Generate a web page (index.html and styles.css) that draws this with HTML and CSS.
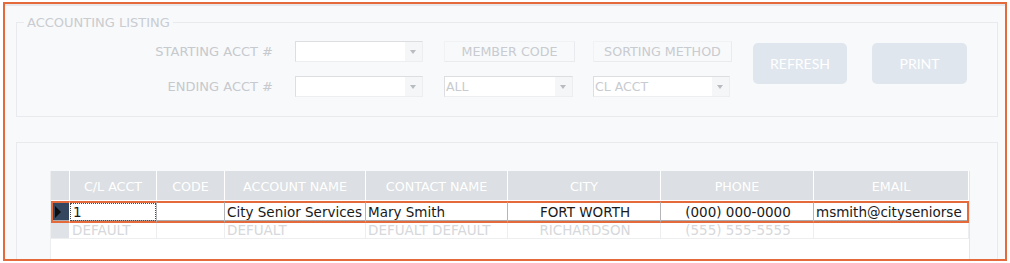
FILE: index.html
```html
<!DOCTYPE html>
<html lang="en">
<head>
    <meta charset="UTF-8">
    <title>Accounting Listing</title>
    <link rel="stylesheet" href="styles.css">
</head>
<body>
    <div class="frame">
        <fieldset class="listing">
            <legend>ACCOUNTING LISTING</legend>
            <div class="filters">
                <div class="labels">
                    <label>STARTING ACCT #</label>
                    <label>ENDING ACCT #</label>
                </div>
                <div class="col col-acct">
                    <div class="combo"><span class="combo-text"></span><span class="combo-btn"></span></div>
                    <div class="combo"><span class="combo-text"></span><span class="combo-btn"></span></div>
                </div>
                <div class="col col-member">
                    <div class="caption">MEMBER CODE</div>
                    <div class="combo combo-member"><span class="combo-text">ALL</span><span class="combo-btn"></span></div>
                </div>
                <div class="col col-sort">
                    <div class="caption">SORTING METHOD</div>
                    <div class="combo combo-sort"><span class="combo-text">CL ACCT</span><span class="combo-btn"></span></div>
                </div>
                <div class="actions">
                    <button class="btn">REFRESH</button>
                    <button class="btn btn-print">PRINT</button>
                </div>
            </div>
        </fieldset>

        <div class="results">
            <div class="grid">
                <table>
                    <colgroup>
                        <col style="width:19px">
                        <col style="width:87px">
                        <col style="width:68px">
                        <col style="width:141px">
                        <col style="width:142px">
                        <col style="width:153px">
                        <col style="width:153px">
                        <col style="width:155px">
                    </colgroup>
                    <thead>
                        <tr>
                            <th></th>
                            <th>C/L ACCT</th>
                            <th>CODE</th>
                            <th>ACCOUNT NAME</th>
                            <th>CONTACT NAME</th>
                            <th>CITY</th>
                            <th>PHONE</th>
                            <th>EMAIL</th>
                        </tr>
                    </thead>
                    <tbody>
                        <tr class="current">
                            <td class="sel"><span class="arrow"></span></td>
                            <td class="focus-cell"><span class="focus">1</span></td>
                            <td></td>
                            <td>City Senior Services</td>
                            <td>Mary Smith</td>
                            <td class="center">FORT WORTH</td>
                            <td class="center">(000) 000-0000</td>
                            <td>msmith@cityseniorse</td>
                        </tr>
                        <tr class="dim">
                            <td class="sel"></td>
                            <td>DEFAULT</td>
                            <td></td>
                            <td>DEFUALT</td>
                            <td>DEFUALT DEFAULT</td>
                            <td class="center">RICHARDSON</td>
                            <td class="center">(555) 555-5555</td>
                            <td></td>
                        </tr>
                    </tbody>
                </table>
            </div>
        </div>
    </div>
</body>
</html>
```

FILE: styles.css
```css
body {
    margin: 0;
    background-color: #fff;
    font-family: "DejaVu Sans", Verdana, sans-serif;
}
.frame {
    margin: 2px 0 0 3px;
    width: 1000px;
    height: 255px;
    border: 2px solid #e4693b;
    background-color: #f8f9fb;
    box-shadow: inset 0 2px 0 #e6e8eb;
    overflow: hidden;
}
.listing {
    margin: 11px 7px 0 11px;
    padding: 0 0 19px;
    border: 1px solid #e8eaed;
    min-width: 0;
}
.listing legend {
    margin-left: 7px;
    padding: 0 3px;
    font-size: 13px;
    line-height: 15px;
    color: #c9ccd0;
}
.filters {
    display: flex;
    margin-top: 11px;
}
.labels {
    width: 256px;
    margin-right: 22px;
    display: flex;
    flex-direction: column;
    align-items: flex-end;
    gap: 14px;
}
.labels label {
    height: 21px;
    line-height: 21px;
    font-size: 13px;
    color: #c6c9cd;
}
.col {
    display: flex;
    flex-direction: column;
    gap: 14px;
}
.col-acct {
    width: 128px;
    margin-right: 21px;
}
.col-member {
    width: 131px;
    margin-right: 18px;
}
.col-sort {
    width: 139px;
    margin-right: 21px;
}
.combo {
    box-sizing: border-box;
    display: flex;
    width: 128px;
    height: 21px;
    background-color: #fff;
    border: 1px solid;
    border-color: #dcdee1 #eceef0 #eceef0 #dcdee1;
}
.combo-member {
    width: 129px;
}
.combo-sort {
    width: 137px;
}
.combo-text {
    flex: 1;
    padding-left: 1px;
    font-size: 12.5px;
    line-height: 19px;
    color: #c8cbcf;
}
.combo-btn {
    width: 17px;
    position: relative;
    background-color: #f5f6f7;
}
.combo-btn::after {
    content: "";
    position: absolute;
    left: 5px;
    top: 8px;
    border-left: 3.5px solid transparent;
    border-right: 3.5px solid transparent;
    border-top: 4px solid #b8bbbf;
}
.caption {
    box-sizing: border-box;
    height: 21px;
    border: 1px solid #eceef0;
    border-color: #f1f2f4 #e9ebee #e9ebee #f1f2f4;
    text-align: center;
    font-size: 12.7px;
    line-height: 19px;
    color: #c8cbcf;
}
.actions {
    display: flex;
    gap: 25px;
    margin-top: 2px;
}
.btn {
    width: 94px;
    height: 41px;
    border: 0;
    border-radius: 5px;
    background-color: #dfe6ee;
    color: #fff;
    font-family: Lato, sans-serif;
    font-size: 14px;
    padding: 0;
}
.btn-print {
    width: 95px;
}
.results {
    margin: 25px 7px 0 11px;
    height: 150px;
    padding: 28px 0 0 34px;
    border: 1px solid #e8eaed;
    background-color: #f8f9fb;
}
.grid {
    width: 918px;
    height: 140px;
    background-color: #fff;
    box-shadow: 1px 0 0 #e4e6e9, -1px 0 0 #eceef0;
}
.grid table {
    width: 918px;
    table-layout: fixed;
    border-collapse: separate;
    border-spacing: 0;
}
.grid th {
    height: 27px;
    padding: 2px 0 0;
    background-color: #dcdfe3;
    border-right: 1px solid #fff;
    border-bottom: 1px solid #fff;
    color: #fff;
    font-size: 12.7px;
    font-weight: normal;
}
.grid td {
    padding: 0 0 0 2px;
    font-size: 13.5px;
    white-space: nowrap;
    overflow: hidden;
}
.grid td.center {
    text-align: center;
}
.current td {
    height: 18px;
    color: #1a1a1a;
    border-top: 2px solid #e4693b;
    border-bottom: 2px solid #e4693b;
    border-right: 1px solid #b3b5b8;
    box-shadow: inset 0 -1px 0 #a9abae;
    line-height: 17px;
}
.current td:first-child {
    border-left: 2px solid #e4693b;
}
.current td:last-child {
    border-right: 2px solid #e4693b;
}
.current td.sel {
    padding: 0;
    background-color: #34475f;
    position: relative;
    border-right: 1px solid #fff;
}
.arrow {
    position: absolute;
    left: 2px;
    top: 3px;
    border-top: 6px solid transparent;
    border-bottom: 6px solid transparent;
    border-left: 6px solid #0b0d10;
}
.current td.focus-cell {
    padding: 0;
}
.focus {
    display: block;
    height: 16px;
    padding-left: 2px;
    border: 1px dotted #4a4a4a;
    line-height: 16px;
}
.dim td {
    height: 15px;
    line-height: 15px;
    color: #d6d8db;
    border-right: 1px solid #eceef0;
    border-bottom: 1px solid #eceef0;
}
.dim td.sel {
    background-color: #dfe2e6;
    border-right: 1px solid #fff;
}
```
